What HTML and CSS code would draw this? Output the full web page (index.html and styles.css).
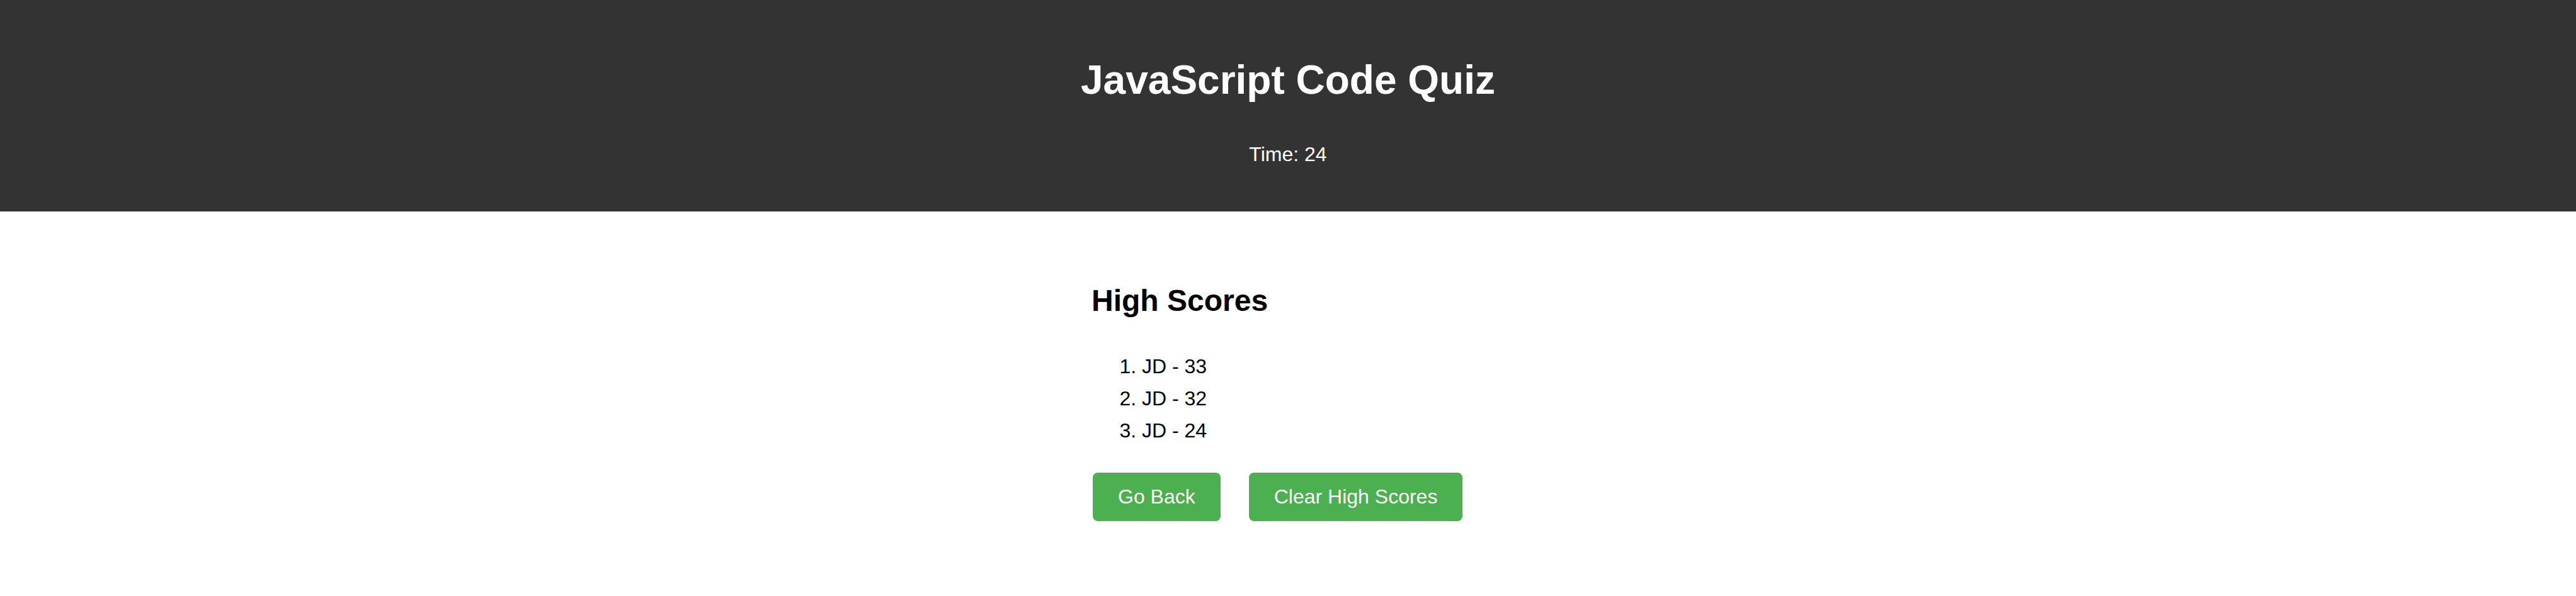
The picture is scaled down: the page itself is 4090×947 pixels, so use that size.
FILE: index.html
```html
<!DOCTYPE html>
<html lang="en">
<head>
<meta charset="utf-8">
<title>JavaScript Code Quiz</title>
<link rel="stylesheet" href="styles.css">
</head>
<body>
<header class="site-header">
  <h1 class="title">JavaScript Code Quiz</h1>
  <p class="timer">Time: 24</p>
</header>
<main class="container">
  <h2 class="scores-title">High Scores</h2>
  <ol class="scores-list">
    <li class="score-item">JD - 33</li>
    <li class="score-item">JD - 32</li>
    <li class="score-item">JD - 24</li>
  </ol>
  <div class="actions">
    <button class="btn">Go Back</button>
    <button class="btn">Clear High Scores</button>
  </div>
</main>
</body>
</html>
```
FILE: styles.css
```css
html, body {
  margin: 0;
  padding: 0;
  background: #ffffff;
}

body {
  font-family: "Liberation Sans", Arial, sans-serif;
  font-size: 32px;
  color: #000000;
}

.site-header {
  background: #333333;
  color: #ffffff;
  text-align: center;
  padding: 90px 0 72px;
  display: flex;
  flex-direction: column;
  align-items: center;
  gap: 63px;
}

.title {
  margin: 0;
  font-size: 64px;
  font-weight: bold;
  line-height: normal;
}

.timer {
  margin: 0;
  font-size: 32px;
  line-height: normal;
}

.container {
  width: 624px;
  margin: 0 auto;
  padding-top: 114px;
}

.scores-title {
  margin: 0 0 52px;
  font-size: 48px;
  font-weight: bold;
  line-height: normal;
}

.scores-list {
  margin: 0 0 41px;
  padding-left: 80px;
}

.score-item {
  padding: 7px 0;
  line-height: normal;
}

.actions {
  display: flex;
  gap: 45px;
  padding-left: 2px;
}

.btn {
  font-family: "Liberation Sans", Arial, sans-serif;
  font-size: 32px;
  line-height: normal;
  color: #ffffff;
  background: #4caf50;
  border: none;
  border-radius: 8px;
  padding: 20px 40px;
  cursor: pointer;
}
```
